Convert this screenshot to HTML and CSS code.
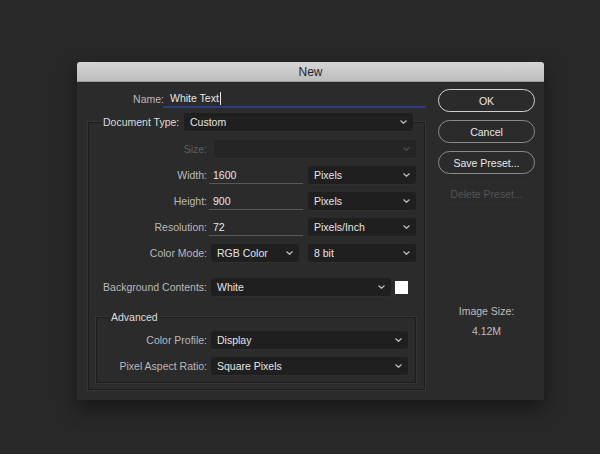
FILE: index.html
```html
<!DOCTYPE html>
<html>
<head>
<meta charset="utf-8">
<link rel="stylesheet" href="styles.css">
</head>
<body>
<div class="dialog">
  <div class="titlebar">New</div>
  <div class="dbody">
    <div class="main">
      <div class="row name-row">
        <span class="lbl name-lbl">Name:</span>
        <div class="textfield focus">White Text<span class="caret"></span></div>
      </div>

      <div class="group outer">
        <div class="row doc-row">
          <span class="legend">Document Type:</span>
          <div class="popup doc-popup"><span>Custom</span><svg class="chev" viewBox="0 0 7 4"><path d="M0.5 0.5 L3.5 3.3 L6.5 0.5"/></svg></div>
        </div>
        <div class="row r-size">
          <span class="lbl disabled">Size:</span>
          <div class="popup disabled-popup"><span></span><svg class="chev dim" viewBox="0 0 7 4"><path d="M0.5 0.5 L3.5 3.3 L6.5 0.5"/></svg></div>
        </div>
        <div class="row r-std">
          <span class="lbl">Width:</span>
          <div class="textfield num">1600</div>
          <div class="popup unit"><span>Pixels</span><svg class="chev" viewBox="0 0 7 4"><path d="M0.5 0.5 L3.5 3.3 L6.5 0.5"/></svg></div>
        </div>
        <div class="row r-std">
          <span class="lbl">Height:</span>
          <div class="textfield num">900</div>
          <div class="popup unit"><span>Pixels</span><svg class="chev" viewBox="0 0 7 4"><path d="M0.5 0.5 L3.5 3.3 L6.5 0.5"/></svg></div>
        </div>
        <div class="row r-std">
          <span class="lbl">Resolution:</span>
          <div class="textfield num">72</div>
          <div class="popup unit"><span>Pixels/Inch</span><svg class="chev" viewBox="0 0 7 4"><path d="M0.5 0.5 L3.5 3.3 L6.5 0.5"/></svg></div>
        </div>
        <div class="row r-std">
          <span class="lbl">Color Mode:</span>
          <div class="popup mode"><span>RGB Color</span><svg class="chev" viewBox="0 0 7 4"><path d="M0.5 0.5 L3.5 3.3 L6.5 0.5"/></svg></div>
          <div class="popup unit"><span>8 bit</span><svg class="chev" viewBox="0 0 7 4"><path d="M0.5 0.5 L3.5 3.3 L6.5 0.5"/></svg></div>
        </div>
        <div class="row r-bg">
          <span class="lbl">Background Contents:</span>
          <div class="popup bgc"><span>White</span><svg class="chev" viewBox="0 0 7 4"><path d="M0.5 0.5 L3.5 3.3 L6.5 0.5"/></svg></div>
          <div class="swatch"></div>
        </div>

        <div class="group inner">
          <div class="adv-legend">Advanced</div>
          <div class="row r-prof">
            <span class="lbl lbl-in">Color Profile:</span>
            <div class="popup adv"><span>Display</span><svg class="chev" viewBox="0 0 7 4"><path d="M0.5 0.5 L3.5 3.3 L6.5 0.5"/></svg></div>
          </div>
          <div class="row r-std">
            <span class="lbl lbl-in">Pixel Aspect Ratio:</span>
            <div class="popup adv"><span>Square Pixels</span><svg class="chev" viewBox="0 0 7 4"><path d="M0.5 0.5 L3.5 3.3 L6.5 0.5"/></svg></div>
          </div>
        </div>
      </div>
    </div>

    <div class="side">
      <div class="btn ok">OK</div>
      <div class="btn">Cancel</div>
      <div class="btn">Save Preset...</div>
      <div class="btn off">Delete Preset...</div>
      <div class="imgsize">
        <div class="is-lbl">Image Size:</div>
        <div class="is-val">4.12M</div>
      </div>
    </div>
  </div>
</div>
</body>
</html>
```

FILE: styles.css
```css
html, body {
  margin: 0;
  padding: 0;
}
body {
  width: 600px;
  height: 454px;
  background: #282828;
  font-family: "Liberation Sans", Arial, sans-serif;
  font-size: 10.5px;
  color: #e2e2e2;
  overflow: hidden;
}
.dialog {
  margin: 62px 0 0 77px;
  width: 467px;
  height: 338px;
  background: #2b2b2b;
  box-shadow: 0 8px 18px rgba(0,0,0,0.45);
  display: flex;
  flex-direction: column;
}
.titlebar {
  height: 20px;
  line-height: 20px;
  text-align: center;
  font-size: 12px;
  color: #262626;
  background: linear-gradient(#d6d6d6, #bdbdbd);
  border-bottom: 1px solid #9a9a9a;
  box-sizing: border-box;
  border-radius: 3px 3px 0 0;
}
.dbody {
  display: flex;
  flex: 1;
}
.main {
  width: 353px;
  padding: 8px 4px 0 11px;
  box-sizing: border-box;
}
.row {
  display: flex;
  align-items: center;
  height: 18px;
}
.lbl {
  width: 122px;
  flex: none;
  text-align: right;
  color: #b9b9b9;
  padding-right: 4px;
  box-sizing: border-box;
  white-space: nowrap;
}
.lbl.disabled { color: #5e5e5e; }
.name-lbl {
  width: 78px;
  padding-right: 2px;
}
.textfield {
  height: 18px;
  line-height: 18px;
  border-bottom: 1px solid #585858;
  box-sizing: border-box;
  padding-left: 3px;
  color: #e6e6e6;
  position: relative;
}
.textfield.focus {
  width: 264px;
  margin-left: -3px;
  padding-left: 7px;
  border-bottom: 2px solid #2c3c7e;
  display: flex;
  align-items: center;
}
.caret {
  display: inline-block;
  width: 1px;
  height: 13px;
  background: #e8e8e8;
  margin-left: 1px;
}
.textfield.num {
  width: 94px;
  margin-left: -2px;
  padding-left: 4px;
}
.group {
  border: 1px solid #1d1d1d;
  box-shadow: 0 0 0 1px #353535;
  box-sizing: border-box;
}
.group.outer {
  width: 337px;
  margin-top: 14px;
  height: 268px;
}
.doc-row {
  margin-top: -10px;
}
.legend {
  margin-left: 13px;
  width: 78px;
  flex: none;
  padding: 0 0 0 1px;
  box-sizing: border-box;
  background: #2b2b2b;
  color: #dcdcdc;
  white-space: nowrap;
}
.popup {
  height: 18px;
  background: #1f1f1f;
  border-radius: 3px;
  display: flex;
  align-items: center;
  justify-content: space-between;
  padding: 0 6px 0 6px;
  box-sizing: border-box;
  color: #e4e4e4;
  box-shadow: 0 1px 0 #303030;
  white-space: nowrap;
  flex: none;
}
.chev {
  width: 7px;
  height: 4px;
  flex: none;
}
.chev path {
  fill: none;
  stroke: #bdbdbd;
  stroke-width: 1.2;
}
.chev.dim path { stroke: #4a4a4a; }
.doc-popup {
  margin-left: 4px;
  width: 229px;
}
.r-size { margin-top: 9px; }
.disabled-popup {
  background: #252525;
  margin-left: 3px;
  width: 202px;
}
.r-std { margin-top: 8px; }
.unit {
  margin-left: 5px;
  width: 108px;
}
.mode {
  margin-left: 0;
  width: 88px;
}
.mode + .unit { margin-left: 9px; }
.r-bg { margin-top: 16px; }
.bgc {
  margin-left: 0;
  width: 180px;
}
.swatch {
  width: 13px;
  height: 13px;
  background: #ffffff;
  margin-left: 4px;
}
.group.inner {
  width: 320px;
  margin: 21px 0 0 7px;
  height: 66px;
}
.adv-legend {
  margin: -7px 0 0 12px;
  padding: 0 2px;
  background: #2b2b2b;
  color: #dcdcdc;
  width: max-content;
  line-height: 13px;
}
.lbl-in { width: 114px; }
.r-prof { margin-top: 7px; }
.adv {
  margin-left: 0;
  width: 197px;
}
.side {
  width: 114px;
  padding: 7px 9px 0 8px;
  box-sizing: border-box;
  display: flex;
  flex-direction: column;
}
.btn {
  height: 23px;
  border: 1px solid #8a8a8a;
  border-radius: 12px;
  box-sizing: border-box;
  display: flex;
  align-items: center;
  justify-content: center;
  color: #e8e8e8;
  margin-bottom: 8px;
  white-space: nowrap;
}
.btn.ok {
  border: 1.5px solid #cfcfcf;
}
.btn.off {
  border-color: #2f2f2f;
  color: #545454;
}
.imgsize {
  margin-top: 92px;
  text-align: center;
  color: #bdbdbd;
}
.is-lbl { line-height: 13px; }
.is-val { line-height: 13px; margin-top: 7px; }
```
